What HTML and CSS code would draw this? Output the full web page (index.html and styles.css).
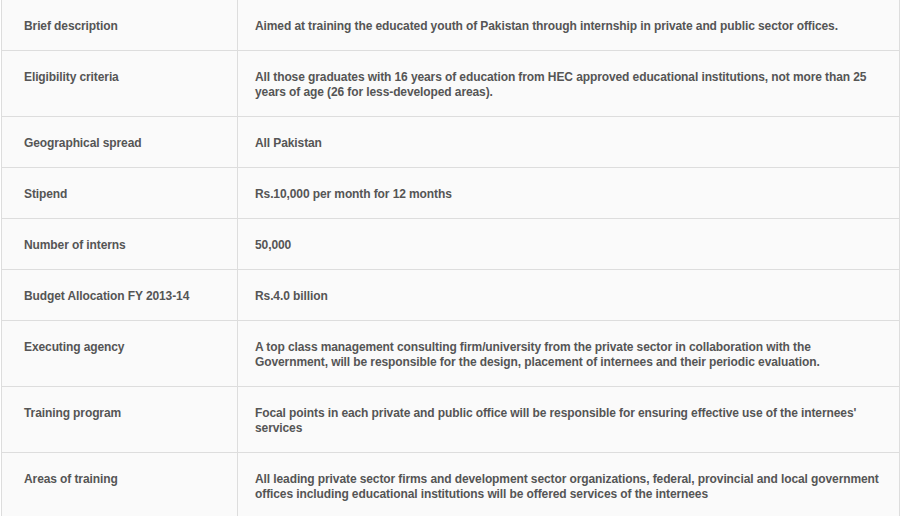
FILE: index.html
```html
<!DOCTYPE html>
<html>
<head>
<meta charset="utf-8">
<link rel="stylesheet" href="styles.css">
</head>
<body>
<div class="wrap">
<table class="info">
<tr><td class="label">Brief description</td><td class="value">Aimed at training the educated youth of Pakistan through internship in private and public sector offices.</td></tr>
<tr><td class="label">Eligibility criteria</td><td class="value">All those graduates with 16 years of education from HEC approved educational institutions, not more than 25 years of age (26 for less-developed areas).</td></tr>
<tr><td class="label">Geographical spread</td><td class="value">All Pakistan</td></tr>
<tr><td class="label">Stipend</td><td class="value">Rs.10,000 per month for 12 months</td></tr>
<tr><td class="label">Number of interns</td><td class="value">50,000</td></tr>
<tr><td class="label">Budget Allocation FY 2013-14</td><td class="value">Rs.4.0 billion</td></tr>
<tr><td class="label">Executing agency</td><td class="value">A top class management consulting firm/university from the private sector in collaboration with the Government, will be responsible for the design, placement of internees and their periodic evaluation.</td></tr>
<tr><td class="label">Training program</td><td class="value">Focal points in each private and public office will be responsible for ensuring effective use of the internees' services</td></tr>
<tr><td class="label">Areas of training</td><td class="value">All leading private sector firms and development sector organizations, federal, provincial and local government offices including educational institutions will be offered services of the internees</td></tr>
</table>
</div>
</body>
</html>
```
FILE: styles.css
```css
html, body {
  margin: 0;
  padding: 0;
  background: #ffffff;
}
.wrap {
  padding-left: 1px;
  width: 899px;
}
.info {
  width: 899px;
  border-collapse: collapse;
  table-layout: fixed;
  background: #fafafa;
  border-left: 1px solid #dddddd;
  border-right: 1px solid #dddddd;
  font-family: "Liberation Sans", Arial, sans-serif;
  font-size: 12px;
  font-weight: bold;
  letter-spacing: -0.1px;
  line-height: 15px;
  color: #555555;
}
.info td {
  border-bottom: 1px solid #dddddd;
  vertical-align: top;
  padding-top: 19px;
  padding-bottom: 16px;
}
.info .label {
  width: 213px;
  padding-left: 22px;
  padding-right: 0;
  border-right: 1px solid #dddddd;
}
.info .value {
  padding-left: 17px;
  padding-right: 15px;
}
```
